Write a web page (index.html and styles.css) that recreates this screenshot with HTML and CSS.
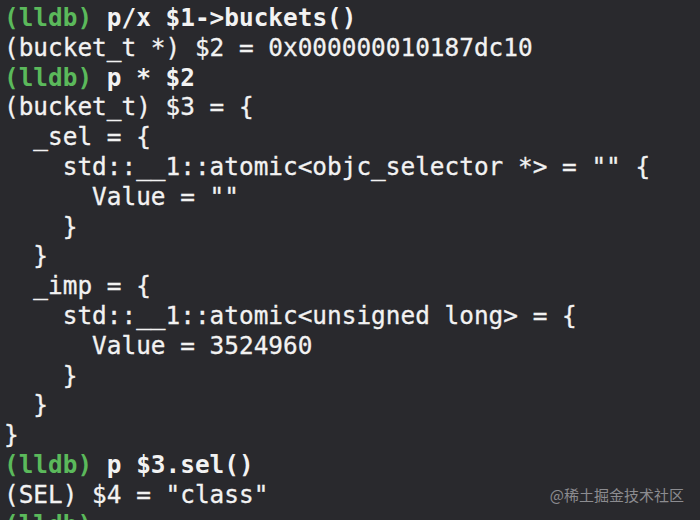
FILE: index.html
```html
<!DOCTYPE html>
<html lang="en">
<head>
<meta charset="utf-8">
<link rel="stylesheet" href="styles.css">
</head>
<body>
<div class="term">
<div class="line cmd"><span class="prompt">(lldb)</span> p/x $1-&gt;buckets()</div>
<div class="line">(bucket_t *) $2 = 0x000000010187dc10</div>
<div class="line cmd"><span class="prompt">(lldb)</span> p * $2</div>
<div class="line">(bucket_t) $3 = {</div>
<div class="line">  _sel = {</div>
<div class="line">    std::__1::atomic&lt;objc_selector *&gt; = "" {</div>
<div class="line">      Value = ""</div>
<div class="line">    }</div>
<div class="line">  }</div>
<div class="line">  _imp = {</div>
<div class="line">    std::__1::atomic&lt;unsigned long&gt; = {</div>
<div class="line">      Value = 3524960</div>
<div class="line">    }</div>
<div class="line">  }</div>
<div class="line">}</div>
<div class="line cmd"><span class="prompt">(lldb)</span> p $3.sel()</div>
<div class="line">(SEL) $4 = "class"</div>
<div class="line cmd"><span class="prompt">(lldb)</span></div>
</div>
<div class="watermark">@稀土掘金技术社区</div>
</body>
</html>
```
FILE: styles.css
```css
html, body {
  margin: 0;
  padding: 0;
  background: #29292d;
  width: 700px;
  height: 520px;
  overflow: hidden;
}
body {
  position: relative;
}
.term {
  padding: 3px 0 0 4px;
  font-family: "DejaVu Sans Mono", "Liberation Mono", monospace;
  font-size: 24.4px;
  color: #f2f2f2;
}
.line {
  white-space: pre;
  height: 29.8px;
  line-height: 29.8px;
  -webkit-text-stroke: 0.3px #f2f2f2;
}
.cmd {
  font-weight: bold;
  -webkit-text-stroke: 0;
}
.prompt {
  color: #5bb95b;
}
.watermark {
  position: absolute;
  right: 16px;
  bottom: 15px;
  font-family: "Noto Sans CJK SC", "Noto Sans", sans-serif;
  font-size: 15px;
  color: #8c8c90;
}
```
